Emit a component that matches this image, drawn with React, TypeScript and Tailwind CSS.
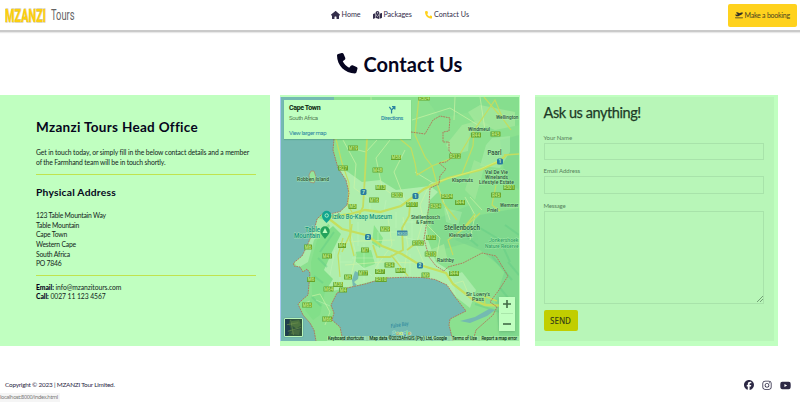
import React from "react";
import {
  FaHouse,
  FaMapLocationDot,
  FaPhone,
  FaPlaneDeparture,
  FaFacebook,
  FaInstagram,
  FaYoutube,
} from "react-icons/fa6";

type Label = { x: number; y: number; w: number; t: string; s?: number; c?: string };

const SHIELDS: [number, number, string][] = [
  [353, 148, "M19"], [396, 157.5, "M58"], [343, 168, "R27"], [377.5, 170, "M48"],
  [380.5, 187.5, "M13"], [374, 200, "M16"], [397, 195, "R302"], [352.5, 206.5, "M5"],
  [424, 98, "R304"], [476, 135, "R44"], [495.5, 134, "R45"], [455, 156, "R312"],
  [509, 187.500, "R301"], [496, 195, "R45"], [447, 196.5, "R304"], [460, 202.5, "R44"],
  [435.5, 206, "R304"], [412, 204.5, "R101"], [385, 229, "M29"], [342, 245.5, "M4"],
  [308, 247, "M6"], [327, 256, "M41"], [365, 250, "M7"], [389.5, 265, "R34"],
  [380, 271.5, "R37"], [400.500, 270.5, "M44"], [363, 273, "M17"], [348, 277, "M5"],
  [311, 279.5, "M6"], [338, 284.5, "M38"], [328.5, 289, "M64"], [343, 290, "M4"],
  [381, 279.500, "R310"], [307, 305, "M65"], [327, 319, "M66"], [431, 237.5, "M12"],
  [418, 243, "R102"], [430.5, 254, "R310"], [454, 273.5, "R44"], [425.5, 275, "M9"],
];

const ROUTES: [number, number, string][] = [
  [363.5, 192, "7"], [500, 161.5, "1"], [415.5, 196, "1"], [368, 237, "2"], [420, 265.500, "2"],
];

const TEAL = "#15917f";

const LABELS: Label[] = [
  { x: 297, y: 181, w: 32, t: "Robben Island", s: 5.5 },
  { x: 332, y: 219, w: 60, t: "Iziko Bo-Kaap Museum", s: 6.5, c: TEAL },
  { x: 305, y: 232, w: 15, t: "Table", s: 6.5, c: TEAL },
  { x: 294, y: 238, w: 26, t: "Mountain", s: 6.5, c: TEAL },
  { x: 496, y: 119, w: 22.5, t: "Wellington", s: 5.5 },
  { x: 468, y: 130.5, w: 22, t: "Windmeul", s: 5.8 },
  { x: 487.5, y: 154.5, w: 14, t: "Paarl", s: 7 },
  { x: 485, y: 173.5, w: 23, t: "Val De Vie", s: 5.5 },
  { x: 485, y: 178.7, w: 23, t: "Winelands", s: 5.5 },
  { x: 479, y: 184, w: 35, t: "Lifestyle Estate", s: 5.5 },
  { x: 452, y: 182, w: 21, t: "Klapmuts", s: 5.8 },
  { x: 500, y: 207, w: 18.5, t: "Wemmer", s: 5.5 },
  { x: 487, y: 212, w: 11, t: "Pniel", s: 5.8 },
  { x: 411, y: 218.5, w: 29, t: "Stellenbosch", s: 5.5 },
  { x: 416, y: 224, w: 18, t: "& Farms", s: 5.5 },
  { x: 444, y: 229.5, w: 36, t: "Stellenbosch", s: 7 },
  { x: 449, y: 236.5, w: 23, t: "Kleingeluk", s: 5 },
  { x: 489, y: 241.5, w: 29.500, t: "Jonkershoek", s: 5.500, c: "#2d9e62" },
  { x: 485, y: 247.5, w: 33.5, t: "Nature Reserve", s: 5.5, c: "#2d9e62" },
  { x: 437, y: 262, w: 17, t: "Raithby", s: 5.8 },
  { x: 466, y: 295.5, w: 24, t: "Sir Lowry's", s: 5.8 },
  { x: 472, y: 301, w: 12, t: "Pass", s: 5.8 },
];

function MapDrawing() {
  return (
    <svg viewBox="280 97 239 244" className="block h-[244px] w-[239px]" fontFamily="Roboto, sans-serif">
      <rect x="280" y="97" width="239" height="244" fill="#8be18f" />
      <g fill="#7bd68d">
        <path d="M425 97H519V125L490 130L470 112L440 118Z" opacity=".3" />
        <path d="M455 240L480 215L519 208V341H500L495 300L505 270L480 250Z" opacity=".85" />
        <path d="M500 140L519 135V190L505 180Z" opacity=".6" />
        <path d="M430 222L470 205L478 240L440 250Z" opacity=".5" />
      </g>
      <g fill="#b2efb0">
        <path d="M338 167L348 172L362 182L380 180L396 190L413 188L430 186L438 192L430 200L426 218L428 240L436 262L452 272L456 296L440 281L385 278L346 288L328 292L320 285L324 262L318 240L330 226L322 214L347 205L349 193Z" opacity=".9" />
        <path d="M318 218L330 222L314 240L308 262L298 268L294 262L306 248Z" opacity=".8" />
        <path d="M445 280L462 272L476 290L470 308L456 297Z" opacity=".8" />
        <path d="M486 145L492 138L510 136L510 152L500 168L480 166Z" opacity=".5" />
        <path d="M444 208L462 212L458 226L446 222Z" opacity=".4" />
      </g>
      <g fill="#a6e89c">
        <path d="M446 145L462 125L480 120L490 125L470 133L468 151L452 155Z" opacity=".75" />
        <path d="M468 112L480 105L515 112L515 126L495 130L475 122Z" opacity=".75" />
        <path d="M474 160L485 165L475 200L465 190Z" opacity=".6" />
        <path d="M430 250L444 244L448 262L438 258Z" opacity=".8" />
        <path d="M355 252L371 250L375 264L364 268L356 262Z" fill="#8be48d" />
        <path d="M374 225L383 238L380 248L372 243Z" fill="#8be48d" />
      </g>
      <path d="M317 240L333 226L341 234L332 252L324 270L333 279L325 292L320 315L313 320L305 310L312 295L311 262Z" fill="#82df89" />
      <g fill="none" stroke="#62cc84" strokeWidth="2" opacity=".45">
        <path d="M334 232L320 252M318 258L327 267M314 276L323 283M312 297L321 306M480 228L500 240L510 262M492 256L512 280M465 235L478 246M500 304L514 316M475 304L500 312M505 225L519 235M508 262L519 275M500 288L510 300" />
      </g>
      <path
        d="M281 97H334V139L333 150L338 168L346 180L349 193L347 205L340 211.7L330 214L322 214L317 219L315 227L307 246L302 256L293.5 263L294 266L300 267L303 272L307 269L310 273L308 295L302 300L298 304L303 315L310 323L314 330L316 341H281Z"
        fill="#74bab1"
      />
      <path
        d="M343 341L340 327L332 320L334 313L331 305L337 293L347 288L365 284L385 278L405 277.3L422 277.5L435 279.5L447 285L455 297L466 311L450 319L449 325L453 341Z"
        fill="#74bab1"
      />
      <path d="M309 175L311 171L314 171L316 177L314 183L310 182Z" fill="#95e69a" stroke="#b3755a" strokeWidth=".6" />
      <g fill="#74bab1">
        <path d="M355 271L359 273L358 279L354 282L357 285L353 287L352 280Z" />
        <path d="M460 321L475 317L489 309L495 310L487 316L470 323Z" />
      </g>
      <g fill="none" stroke="#cdf3a4" strokeWidth=".8" opacity=".85">
        <path d="M343 140L356 164L354 188L368 198M350 148L366 152L377 140M371 97L372 139M390 140L376 158L382 187L405 204M405 150L394 172L405 200M412 120L450 108L478 125M415 172L438 186L450 220M465 197L475 215L470 240M338 243L360 241L395 240M350 230L356 255L350 280M388 218L392 245L376 267L375 281M403 217L408 246L403 277M425 214L416 245L426 268M345 265L382 262L424 263M312 296L320 294L330 312L325 325M302 304L310 301M447 286L463 281L470 298M444 180L430 184L420 205L424 222L440 238L436 260M470 197L482 210M455 97L454 120M480 97L485 130" />
      </g>
      <g fill="none" stroke="#c3f4bb" strokeWidth=".6" opacity=".8">
        <path d="M358 222V246M364 244V282M378 232V250M396 212V228M412 208V240M352 258H374M378 258V276M390 232H410M402 222H420M335 250L330 275M340 255V284M356 262L372 276M386 200L384 212M370 200V212M390 248L404 270M410 254V276M398 236L416 240M340 262H352M316 300L330 306" />
      </g>
      <g fill="none" stroke="#c3dd60" strokeWidth="1.2">
        <path d="M336 139L342 163L349 183L348 206L352 212M419 97L415 135L425 157L432 166L417 175L415 163L411 148L400 139M432 166L452 158M432 166L437 184L443 203L457 220M457 159L475 129L495 100L503 119L511 130M462 174L473 146L474 130M496 185L492 205L500 211M453 255L448 240L462 230L475 214M462 230L480 213M340 277L338 255L343 238M391 255L408 276M484 97L501 117" />
        <path d="M367 139L365 175L363 207L359 215M373 245L377 257L390 257L403 250L402 228L409 216L410 205M407 250L420 240" strokeWidth="1.8" />
        <path d="M504 155L519 154" strokeWidth="1.600" />
      </g>
      <g fill="none" stroke="#c5df5d" strokeWidth="2.3">
        <path d="M330 217L350 214L365 210L380 212L401 206L424 189L448 178L480 170L500 161L506 155" />
        <path d="M328 218L342 229L366 235L382 246L402 254L420 265L446 273L453 284L472 299L485 305L515 306" />
        <path d="M350 214L350 234L342 252M352 224L350 240L354 256M485 305L484 296L497 301" strokeWidth="1.4" />
      </g>
      <path d="M440 181L480 169L498 161" stroke="#d8f17a" strokeWidth=".7" fill="none" />
      <g fill="none" stroke="#b56b53" strokeWidth=".85" strokeDasharray="1.8 .8">
        <path d="M334 139L333 150L338 168L346 180L349 193L347 205L340 211.7L330 214L322 214L317 219L315 227L307 246L302 256L293.5 263L294 266L300 267L303 272L307 269L310 273L308 295L302 300L298 304L303 315L310 323L314 330L316 341" />
        <path d="M343 341L340 327L332 320L334 313L331 305L337 293L347 288L365 284L385 278L405 277.3L422 277.5L435 279.5L447 285L455 297L466 311L450 319L449 325L453 341" />
        <path d="M411 132L425 134L433 120L440 116L450 118L449 131L443 132L443 142L449 142L449 151L454 156L446 162L439 163L446 169L440 176L439 184L430 188L429 206L427 219L426 227L424 239L429 257L436 266L444 271L448 267L463 263L482 253L496 256L508 276L499 290L490 302L497 307L493 315L476 330L473 341" />
      </g>
      {SHIELDS.map(([x, y, t], i) => {
        const w = t.length > 3 ? 11.5 : t.length > 2 ? 10 : 8;
        return (
          <g key={i}>
            <rect x={x - w / 2} y={y - 2.5} width={w} height="5" rx=".5" fill="#65a32b" />
            <text x={x} y={y + 1.6} textAnchor="middle" fontSize="4.5" fontWeight="500" fill="#c3ef8b">{t}</text>
          </g>
        );
      })}
      <rect x="397" y="230.5" width="10.5" height="5" rx=".6" fill="#3d83a3" />
      <text x="402.2" y="234.7" fontSize="4.4" textAnchor="middle" fill="#b8f5cc">R300</text>
      {ROUTES.map(([x, y, t], i) => (
        <g key={i}>
          <rect x={x - 3} y={y - 3} width="6" height="6" rx="1.6" fill="#287ba0" />
          <text x={x} y={y + 1.9} textAnchor="middle" fontSize="5" fontWeight="700" fill="#bff7c4">{t}</text>
        </g>
      ))}
      {LABELS.map((l, i) => (
        <text
          key={i} x={l.x} y={l.y} fontSize={l.s} textLength={l.w} lengthAdjust="spacingAndGlyphs"
          fill={l.c ?? "#285337"} fontWeight="500" stroke="#b8f5b8" strokeWidth=".9" strokeOpacity=".7" paintOrder="stroke"
        >
          {l.t}
        </text>
      ))}
      <path d="M326.500 223C323 219.500 322 218 322 215.500A4.700 4.700 0 0 1 331.400 215.500C331.400 218 330 219.500 326.500 223Z" fill="#12a58f" />
      <circle cx="326.700" cy="215.500" r="1.700" fill="none" stroke="#b6f8c9" strokeWidth=".9" />
      <path d="M325 239C321.500 234.500 320.300 233.500 320.300 231A4.700 4.700 0 0 1 329.700 231C329.700 233.500 328.500 234.500 325 239Z" fill="#24a35c" />
      <path d="M322.500 233L325 228L327.500 233Z" fill="#c0ffc0" />
      <text x="391" y="328" fontSize="5.5" fontStyle="italic" fill="#23819b" textLength="18" lengthAdjust="spacingAndGlyphs" transform="rotate(-9 391 328)">False Bay</text>
      <text x="392" y="335" fontSize="6" textLength="19" lengthAdjust="spacingAndGlyphs" stroke="#c0ffc0" strokeWidth=".7" paintOrder="stroke">
        <tspan fill="#408fc0">G</tspan><tspan fill="#b78049">o</tspan><tspan fill="#c7cf43">o</tspan><tspan fill="#408fc0">g</tspan><tspan fill="#32a865">l</tspan><tspan fill="#b78049">e</tspan>
      </text>
      <rect x="327" y="336" width="192" height="5" fill="#b4f0b4" opacity=".6" />
      <g fontSize="4.800" fill="#163a1c" stroke="#163a1c" strokeWidth=".12">
        <text x="328" y="340" textLength="36" lengthAdjust="spacingAndGlyphs">Keyboard shortcuts</text>
        <text x="369.5" y="340" textLength="77.5" lengthAdjust="spacingAndGlyphs">Map data ©2023AfriGIS (Pty) Ltd, Google</text>
        <text x="452" y="340" textLength="25" lengthAdjust="spacingAndGlyphs">Terms of Use</text>
        <text x="481.5" y="340" textLength="35.5" lengthAdjust="spacingAndGlyphs">Report a map error</text>
      </g>
      <path d="M367 336V341M449 336V341M479 336V341" stroke="#7fc58b" strokeWidth=".6" />
      <path d="M280.500 97V341" stroke="#a9c9f2" />
    </svg>
  );
}

function Satellite() {
  return (
    <svg viewBox="0 0 18 18" className="h-full w-full">
      <rect width="18" height="18" fill="#31573e" />
      <path d="M0 0H5L4 6L6 10L3 18H0Z" fill="#203e4d" />
      <path d="M7 2L15 1L17 7L12 10L6 6Z" fill="#4d7540" />
      <path d="M8 12L16 11L15 17L6 16Z" fill="#466b42" />
      <path d="M2 6L14 4M6 1L9 17M3 13L17 9" stroke="#6e8f4c" strokeWidth=".7" fill="none" />
    </svg>
  );
}

function MapPanel() {
  return (
    <div className="relative ml-[10px] h-[251px] w-[239.5px] bg-[#c0ffc0] pt-[2px]">
      <MapDrawing />
      <div className="absolute left-[4px] top-[5px] flex h-[39px] w-[127px] justify-between whitespace-nowrap bg-[#c0ffc0] pl-[5px] pr-[8px] pt-[3.5px] font-[Roboto,sans-serif] shadow-[0_1px_1px_rgba(40,120,70,0.25)]">
        <div>
          <div className="text-[7px] font-bold leading-[9px] tracking-[-0.35px] text-[#0c2810]">Cape Town</div>
          <div className="text-[6px] leading-[10px] tracking-[-0.35px] text-[#517d55]">South Africa</div>
          <div className="mt-[5px] text-[6px] leading-[9px] tracking-[-0.4px] text-[#2b84a0]">View larger map</div>
        </div>
        <div className="flex flex-col items-center text-[#2b84a0]">
          <svg viewBox="0 0 9 10" className="mt-[1px] h-[9px] w-[8px]" fill="none" stroke="currentColor" strokeWidth="1.4">
            <path d="M4 9.500V5.500L7 2.500M1.500 2L4 5.500M4.500 1.800H7.700V5" />
          </svg>
          <div className="text-[5.5px] font-medium leading-[8px] tracking-[-0.3px]">Directions</div>
        </div>
      </div>
      <div className="absolute left-[4px] top-[223px] h-[19px] w-[19px] rounded-[1px] border border-[#b8f5b8] shadow-[0_0_1px_#315a42]">
        <Satellite />
      </div>
      <div className="absolute left-[219px] top-[202px] flex h-[34px] w-[16px] flex-col items-center justify-around bg-[#c0ffc0] text-[#426c46] shadow-sm">
        <svg viewBox="0 0 8 8" className="h-[8px] w-[8px]" stroke="currentColor" strokeWidth="1.6"><path d="M0 4H8M4 0V8" /></svg>
        <div className="h-px w-[12px] bg-[#a9e6aa]" />
        <svg viewBox="0 0 8 8" className="h-[8px] w-[8px]" stroke="currentColor" strokeWidth="1.6"><path d="M0 4H8" /></svg>
      </div>
    </div>
  );
}

function Office() {
  return (
    <div className="h-[251px] w-[270px] whitespace-nowrap bg-[#c0ffc0] pl-[36px] text-[#13251b]">
      <h2 className="pt-[23px] text-[13.5px] font-bold leading-[18px] tracking-[0.31px] text-[#05051b]">Mzanzi Tours Head Office</h2>
      <p className="mt-[12px] text-[6.8px] leading-[9.6px] tracking-[-0.12px]">
        Get in touch today, or simply fill in the below contact details and a member
        <br />
        <span className="tracking-[-0.15px]">of the Farmhand team will be in touch shortly.</span>
      </p>
      <div className="mt-[7px] h-px w-[220px] bg-[#c0e34f]" />
      <h3 className="mt-[11px] text-[10.3px] font-bold leading-[13px] tracking-[0.22px] text-[#05051b]">Physical Address</h3>
      <p className="mt-[12px] text-[6.8px] leading-[9.58px] tracking-[-0.22px]">
        123 Table Mountain Way<br />Table Mountain<br />Cape Town<br />Western Cape<br />South Africa<br />PO 7846
      </p>
      <div className="mt-[6px] h-px w-[220px] bg-[#c0e34f]" />
      <p className="mt-[7px] text-[6.8px] leading-[9.7px] tracking-[-0.08px]">
        <b className="font-black text-[#05051b]">Email:</b> info@mzanzitours.com<br />
        <b className="font-black text-[#05051b]">Call:</b> 0027 11 123 4567
      </p>
    </div>
  );
}

function ContactForm() {
  const field = "block w-[220.5px] resize-none border border-[#a8e3aa] bg-transparent";
  return (
    <div className="ml-[15.5px] h-[251px] w-[243px] bg-[#c0ffc0] pt-[2px]">
      <form className="h-[244px] w-[239px] whitespace-nowrap bg-[#b8f6b8] pl-[8.5px] pt-[5px] text-[6px] text-[#55815a]">
        <h2 className="text-[14.5px] leading-[22px] tracking-[-0.43px] text-[#203b27] [-webkit-text-stroke:0.25px_#203b27]">Ask us anything!</h2>
        <label className="mt-[10px] block leading-[8px] tracking-[-0.05px]">Your Name</label>
        <input className={field + " mt-[1px] h-[17px]"} />
        <label className="mt-[7px] block leading-[8px]">Email Address</label>
        <input className={field + " mt-[1px] h-[18px]"} />
        <label className="mt-[8px] block leading-[8px] tracking-[-0.15px]">Message</label>
        <div className="relative mt-[1px]">
          <textarea className={field + " h-[93px]"} />
          <svg viewBox="0 0 6 6" className="absolute left-[213px] top-[85px] h-[6px] w-[6px]" stroke="#618b65" strokeWidth=".8"><path d="M0 6L6 0M3 6L6 3" /></svg>
        </div>
        <button type="button" className="mt-[6px] h-[21px] w-[34px] rounded-[2px] bg-[#c1ce00] font-['Noto_Sans',sans-serif] text-[8px] font-medium text-[#364116]">SEND</button>
      </form>
    </div>
  );
}

export default function App() {
  return (
    <div className="flex h-[402px] w-[800px] flex-col overflow-hidden bg-white font-[Lato,sans-serif]">
      <header className="flex h-[32px] shrink-0 items-center whitespace-nowrap border-b-2 border-[#cacaca] pl-[5px] pr-[3.5px] shadow-[0_1px_1px_#e8e8e8]">
        <svg viewBox="0 0 72 30" className="h-[30px] w-[72px]" fontFamily="Roboto, sans-serif">
          <text x="0" y="22" fontSize="19" fontWeight="800" textLength="41" lengthAdjust="spacingAndGlyphs" fill="#fdcf0d" stroke="#c9bd8a" strokeWidth=".8" paintOrder="stroke">MZANZI</text>
          <text x="46" y="20" fontSize="14" textLength="23.5" lengthAdjust="spacingAndGlyphs" fill="#646464">Tours</text>
        </svg>
        <nav className="ml-[253.5px] flex items-center text-[7.2px] text-[#342e4b]">
          <FaHouse className="h-[8px] w-[9px]" />
          <span className="ml-[2px] w-[19px]">Home</span>
          <FaMapLocationDot className="ml-[12px] h-[8px] w-[9px]" />
          <span className="ml-[2px] w-[28px] tracking-[-0.1px]">Packages</span>
          <FaPhone className="ml-[13px] h-[7.5px] w-[7.5px] text-[#ffd21e]" />
          <span className="ml-[2px] w-[35px]">Contact Us</span>
        </nav>
        <button type="button" className="ml-auto flex h-[23px] w-[68.5px] items-center rounded-[2px] bg-[#ffd21e] pl-[6.5px] text-[7px] tracking-[-0.23px] text-[#4b431f]">
          <FaPlaneDeparture className="mr-[2px] h-[8px] w-[8px] shrink-0 text-[#302e28]" />
          Make a booking
        </button>
      </header>
      <h1 className="flex h-[63px] shrink-0 items-center whitespace-nowrap pl-[337px] text-[20px] font-bold leading-none text-[#060520]">
        <FaPhone className="mr-[6px] h-[20.5px] w-[20.5px]" />
        <span className="tracking-[0.05px]">Contact Us</span>
      </h1>
      <main className="flex h-[251px] shrink-0">
        <Office />
        <MapPanel />
        <ContactForm />
      </main>
      <footer className="flex min-h-0 flex-1 flex-col justify-end">
        <div className="flex h-[16px] items-center justify-between pl-[5px] pr-[9.5px] text-[#2c2844]">
          <span className="text-[6.4px] tracking-[-0.22px]">Copyright © 2023 | MZANZI Tour Limited.</span>
          <div className="flex items-center gap-[8px]">
            <FaFacebook className="h-[10px] w-[10px]" />
            <FaInstagram className="h-[10.5px] w-[10px]" />
            <FaYoutube className="h-[11px] w-[11px]" />
          </div>
        </div>
        <div className="h-[9px] w-[60px] whitespace-nowrap bg-[#f5f5f5] font-['Noto_Sans',sans-serif] text-[5.5px] leading-[9px] tracking-[-0.36px] text-[#777]">localhost:8000/index.html</div>
      </footer>
    </div>
  );
}
